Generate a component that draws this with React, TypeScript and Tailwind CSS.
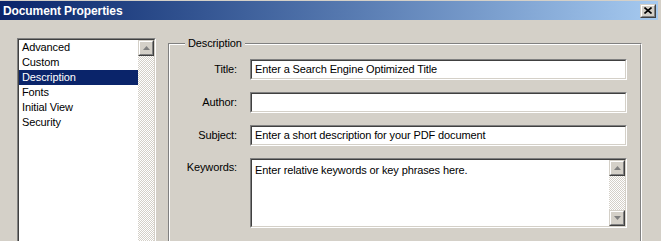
const FONT = "font-['Liberation_Sans',Arial,sans-serif]";

function Raised({ className = "", children }: { className?: string; children?: React.ReactNode }) {
  return (
    <div className={`border border-t-[#d4d0c8] border-l-[#d4d0c8] border-r-[#404040] border-b-[#404040] ${className}`}>
      <div className="flex h-full w-full items-center justify-center border border-t-white border-l-white border-r-[#808080] border-b-[#808080] bg-[#d4d0c8]">
        {children}
      </div>
    </div>
  );
}

function Sunken({ className = "", innerClass = "", children }: { className?: string; innerClass?: string; children?: React.ReactNode }) {
  return (
    <div className={`border border-t-[#808080] border-l-[#808080] border-r-white border-b-white ${className}`}>
      <div className={`h-full w-full border border-t-[#404040] border-l-[#404040] border-r-[#d4d0c8] border-b-[#d4d0c8] bg-white ${innerClass}`}>
        {children}
      </div>
    </div>
  );
}

function Arrow({ down }: { down?: boolean }) {
  return (
    <svg width="7" height="4" viewBox="0 0 7 4" className="block">
      {down ? (
        <polygon points="0,0 7,0 3.5,4" fill="#808080" />
      ) : (
        <polygon points="3.5,0 7,4 0,4" fill="#808080" />
      )}
    </svg>
  );
}

// checkered scrollbar track
const track =
  "bg-[repeating-conic-gradient(#d4d0c8_0_25%,#ffffff_0_50%)] bg-[length:2px_2px]";

const items = ["Advanced", "Custom", "Description", "Fonts", "Initial View", "Security"];

function Field({ label, value }: { label: string; value?: string }) {
  return (
    <>
      <div className="flex h-[21px] items-center justify-end">{label}</div>
      <Sunken className="h-[21px]" innerClass="flex items-center px-[3px] whitespace-nowrap overflow-hidden">
        {value}
      </Sunken>
    </>
  );
}

export default function App() {
  return (
    <div className={`${FONT} h-[241px] w-[661px] overflow-hidden bg-[#d4d0c8] pt-[1px] text-[11px] tracking-[-0.12px] text-black`}>
      {/* title bar */}
      <div className="mr-[3px] flex h-[19px] items-center justify-between bg-gradient-to-r from-[#0a246a] to-[#a6caf0] pl-[3px] pr-[2px]">
        <span className="text-[12px] font-bold tracking-[-0.1px] text-white">Document Properties</span>
        <Raised className="h-[14px] w-[16px]">
          <svg width="8" height="7" viewBox="0 0 8 7" className="block">
            <path d="M0.5 0.5 L7.5 6.5 M7.5 0.5 L0.5 6.5" stroke="#000" strokeWidth="1.6" />
          </svg>
        </Raised>
      </div>

      <div className="flex pl-[17px] pt-[18px]">
        {/* category list */}
        <Sunken className="h-[220px] w-[139px] shrink-0" innerClass="flex">
          <ul className="w-[119px]">
            {items.map((it) => (
              <li
                key={it}
                className={`flex h-[15px] items-center pl-[3px] ${
                  it === "Description" ? "bg-[#0a246a] text-white" : ""
                }`}
              >
                {it}
              </li>
            ))}
          </ul>
          <div className={`flex-1 ${track}`}>
            <Raised className="h-[16px] w-[16px]">
              <Arrow />
            </Raised>
          </div>
        </Sunken>

        {/* description group */}
        <div className="relative ml-[12px] mt-[5px] h-[220px] w-[474px] shrink-0 border border-t-[#808080] border-l-[#808080] border-r-white border-b-white">
          <div className="h-full w-full border border-t-white border-l-white border-r-[#808080] border-b-[#808080]">
            <span className="absolute left-[16px] top-[-7px] bg-[#d4d0c8] px-[3px] leading-[13px]">Description</span>
            <div className="grid grid-cols-[67px_377px] gap-x-[13px] gap-y-[12px] pt-[14px]">
              <Field label="Title:" value="Enter a Search Engine Optimized Title" />
              <Field label="Author:" />
              <Field label="Subject:" value="Enter a short description for your PDF document" />
              <div className="flex justify-end pt-[1px]">Keywords:</div>
              <Sunken className="h-[70px]" innerClass="flex">
                <div className="flex-1 px-[3px] pt-[2px]">Enter relative keywords or key phrases here.</div>
                <div className={`flex w-[16px] flex-col justify-between ${track}`}>
                  <Raised className="h-[16px] w-[16px]">
                    <Arrow />
                  </Raised>
                  <Raised className="h-[16px] w-[16px]">
                    <Arrow down />
                  </Raised>
                </div>
              </Sunken>
            </div>
          </div>
        </div>
      </div>
    </div>
  );
}
